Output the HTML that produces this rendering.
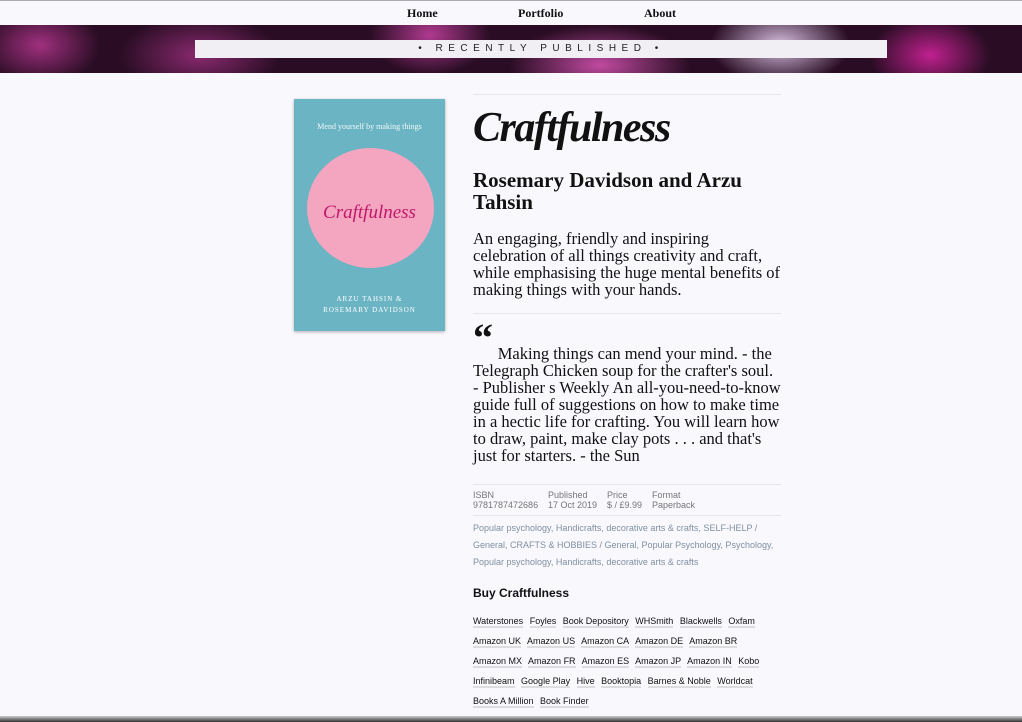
<!DOCTYPE html>
<html><head><meta charset="utf-8"><style>
*{margin:0;padding:0;box-sizing:border-box}
body{width:1022px;height:722px;overflow:hidden;background:#f8f8fd;font-family:"Liberation Serif",serif;position:relative;color:#111}
.top{position:absolute;top:0;left:0;right:0;height:1px;background:#aaa}
.nav{position:absolute;top:6px;left:0;width:1022px;font-weight:bold;font-size:12px;font-family:"Liberation Serif",serif}
.nav span{position:absolute}
.banner{position:absolute;top:25px;left:0;width:1022px;height:48px;background:
radial-gradient(ellipse 60px 40px at 40px 20px,#a0307f,transparent),
radial-gradient(ellipse 80px 40px at 200px 30px,#8a2a70,transparent),
radial-gradient(ellipse 60px 40px at 430px 10px,#b03a90,transparent),
radial-gradient(ellipse 90px 40px at 600px 40px,#c04aa0,transparent),
radial-gradient(ellipse 70px 40px at 780px 20px,#d7c0e0,transparent),
radial-gradient(ellipse 60px 40px at 930px 30px,#c0208f,transparent),#2a0d24;overflow:hidden}
.rp{position:absolute;top:15px;left:195px;width:692px;height:18px;background:#f1eff4;text-align:center;font-family:"Liberation Sans",sans-serif;font-size:10px;letter-spacing:5.5px;line-height:18px;color:#222}
.cover{position:absolute;left:294px;top:99px;width:151px;height:232px;background:#6bb4c4;box-shadow:0 1px 3px rgba(0,0,0,.3);color:#fff;text-align:center}
.blob{position:absolute;left:13px;top:49px;width:127px;height:120px;border-radius:50%;background:#f4a5c0}
.col{position:absolute;left:473px;width:330px;white-space:nowrap}
.hr{position:absolute;left:473px;width:308px;height:1px;background:#e6e6ea}
.meta{font-family:"Liberation Sans",sans-serif;font-size:9px;color:#777;line-height:10px}
a{color:#111;text-decoration:none;border-bottom:2px solid #ddd;margin-right:4px}
.ser{font-size:16.5px;letter-spacing:0}
</style></head><body>
<div class="top"></div>
<div class="nav"><span style="left:407px">Home</span><span style="left:518px">Portfolio</span><span style="left:644px">About</span></div>
<div class="banner"><div class="rp">• RECENTLY PUBLISHED •</div></div>
<div class="cover">
<div style="position:absolute;top:23px;width:100%;font-size:8px;opacity:.9">Mend yourself by making things</div>
<div class="blob"></div>
<div style="position:absolute;top:103px;width:100%;font-size:19px;font-style:italic;color:#c0176a">Craftfulness</div>
<div style="position:absolute;top:195px;width:100%;font-size:7px;letter-spacing:1px;line-height:11px">ARZU TAHSIN &amp;<br>ROSEMARY DAVIDSON</div>
</div>
<div class="hr" style="top:94px"></div>
<div class="col" style="top:104px;font-size:42px;font-weight:bold;font-style:italic;letter-spacing:-1.5px">Craftfulness</div>
<div class="col" style="top:169px;font-size:21px;font-weight:bold;line-height:22px">Rosemary Davidson and Arzu<br>Tahsin</div>
<div class="col ser" style="top:230px;line-height:17px">An engaging, friendly and inspiring<br>celebration of all things creativity and craft,<br>while emphasising the huge mental benefits of<br>making things with your hands.</div>
<div class="hr" style="top:313px"></div>
<div class="col" style="top:322px;font-size:40px;font-weight:bold;line-height:32px;font-family:'Liberation Serif',serif">“</div>
<div class="col ser" style="top:345px;line-height:17px">&nbsp;&nbsp;&nbsp;&nbsp;&nbsp;&nbsp;Making things can mend your mind. - the<br>Telegraph Chicken soup for the crafter's soul.<br>- Publisher s Weekly An all-you-need-to-know<br>guide full of suggestions on how to make time<br>in a hectic life for crafting. You will learn how<br>to draw, paint, make clay pots . . . and that's<br>just for starters. - the Sun</div>
<div class="hr" style="top:484px"></div>
<div class="meta" style="position:absolute;top:490px;left:473px">ISBN<br>9781787472686</div>
<div class="meta" style="position:absolute;top:490px;left:548px">Published<br>17 Oct 2019</div>
<div class="meta" style="position:absolute;top:490px;left:607px">Price<br>$ / £9.99</div>
<div class="meta" style="position:absolute;top:490px;left:652px">Format<br>Paperback</div>
<div class="hr" style="top:515px"></div>
<div class="col meta" style="top:520px;line-height:17px;color:#8090a0">Popular psychology, Handicrafts, decorative arts &amp; crafts, SELF-HELP /<br>General, CRAFTS &amp; HOBBIES / General, Popular Psychology, Psychology,<br>Popular psychology, Handicrafts, decorative arts &amp; crafts</div>
<div class="col" style="top:586px;font-family:'Liberation Sans',sans-serif;font-weight:bold;font-size:12px">Buy Craftfulness</div>
<div class="col" style="top:611px;font-family:'Liberation Sans',sans-serif;font-size:9px;line-height:20px">
<a>Waterstones</a> <a>Foyles</a> <a>Book Depository</a> <a>WHSmith</a> <a>Blackwells</a> <a>Oxfam</a><br>
<a>Amazon UK</a> <a>Amazon US</a> <a>Amazon CA</a> <a>Amazon DE</a> <a>Amazon BR</a><br>
<a>Amazon MX</a> <a>Amazon FR</a> <a>Amazon ES</a> <a>Amazon JP</a> <a>Amazon IN</a> <a>Kobo</a><br>
<a>Infinibeam</a> <a>Google Play</a> <a>Hive</a> <a>Booktopia</a> <a>Barnes &amp; Noble</a> <a>Worldcat</a><br>
<a>Books A Million</a> <a>Book Finder</a></div>
<div style="position:absolute;left:0;top:716px;width:1022px;height:6px;background:linear-gradient(#ccc,#333)"></div>
</body></html>
